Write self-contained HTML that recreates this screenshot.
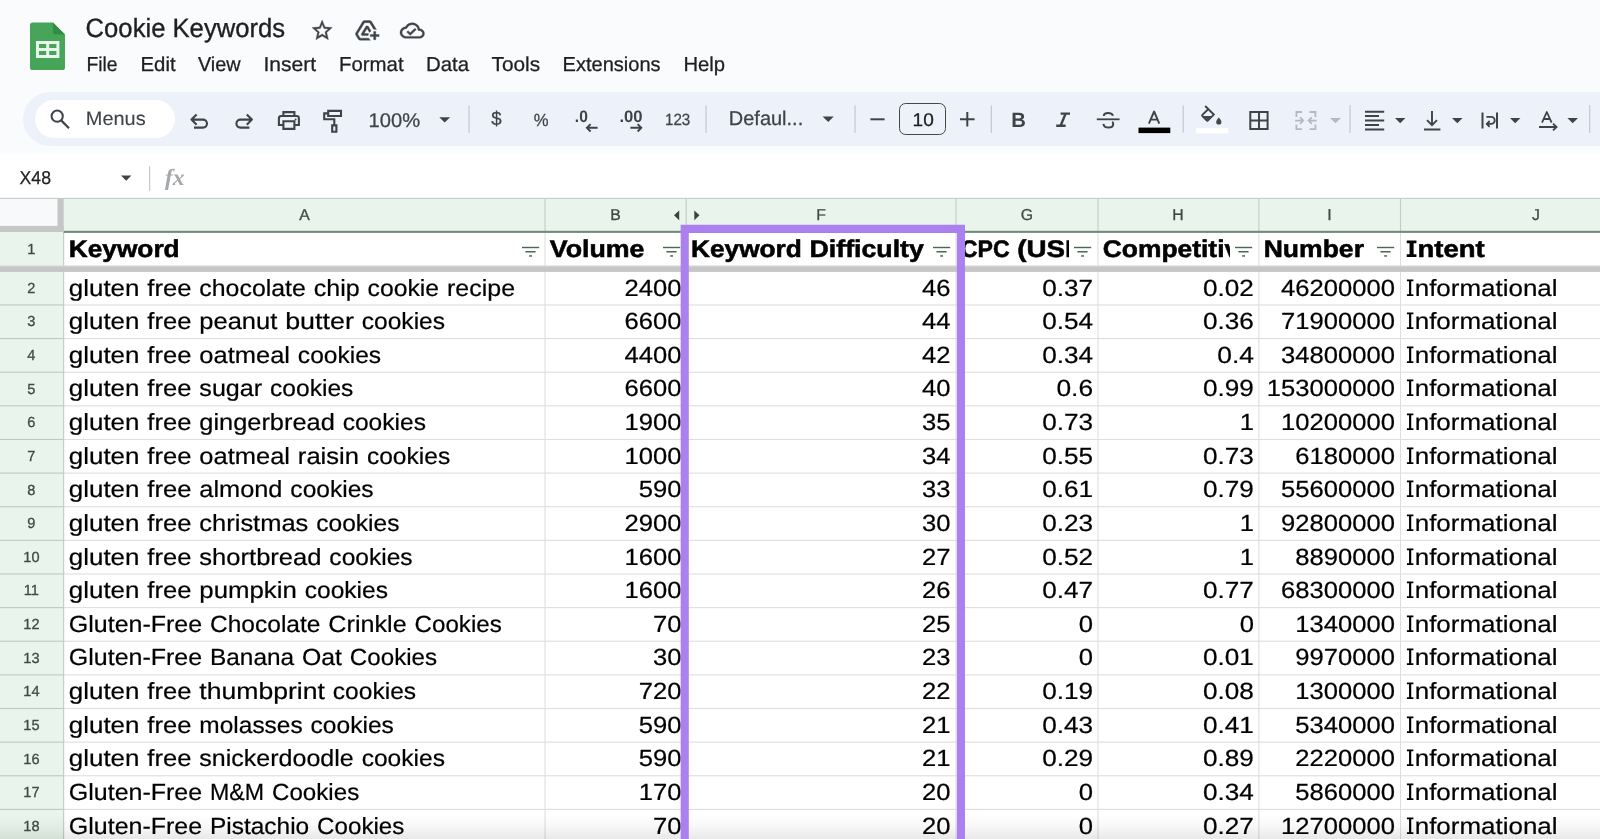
<!DOCTYPE html>
<html><head><meta charset="utf-8"><title>Cookie Keywords - Google Sheets</title>
<style>

html,body{margin:0;padding:0}
body{width:1600px;height:839px;overflow:hidden;position:relative;background:#f9fbfd;font-family:"Liberation Sans",sans-serif}
text{white-space:pre}
.a{position:absolute}
svg{position:absolute;overflow:visible}
svg svg{overflow:hidden}
#root{position:absolute;left:0;top:0;width:1600px;height:839px;will-change:transform}

</style></head>
<body>
<div id='root'>
<div class='a' style='left:0px;top:156px;width:1600px;height:43px;background:#ffffff;'></div>
<div class='a' style='left:0px;top:150px;width:1600px;height:6px;background:linear-gradient(#f9fbfd,#ffffff);'></div>
<svg style='left:0;top:0' width='1600' height='839' viewBox='0 0 1600 839'><rect x='0.00' y='198.40' width='1600.00' height='641.00' fill='#ffffff'/><rect x='63.60' y='198.40' width='1537.00' height='33.40' fill='#e9f5ec'/><rect x='0.00' y='232.00' width='63.60' height='607.00' fill='#e9f5ec'/><rect x='0.00' y='198.40' width='57.60' height='27.80' fill='#f8f9fa'/><rect x='0.00' y='197.85' width='1600.00' height='1.10' fill='#c4ccc7'/><rect x='63.60' y='304.40' width='1537.00' height='1.10' fill='#dedede'/><rect x='0.00' y='304.40' width='63.60' height='1.10' fill='#bccbc1'/><rect x='63.60' y='338.03' width='1537.00' height='1.10' fill='#dedede'/><rect x='0.00' y='338.03' width='63.60' height='1.10' fill='#bccbc1'/><rect x='63.60' y='371.66' width='1537.00' height='1.10' fill='#dedede'/><rect x='0.00' y='371.66' width='63.60' height='1.10' fill='#bccbc1'/><rect x='63.60' y='405.29' width='1537.00' height='1.10' fill='#dedede'/><rect x='0.00' y='405.29' width='63.60' height='1.10' fill='#bccbc1'/><rect x='63.60' y='438.92' width='1537.00' height='1.10' fill='#dedede'/><rect x='0.00' y='438.92' width='63.60' height='1.10' fill='#bccbc1'/><rect x='63.60' y='472.55' width='1537.00' height='1.10' fill='#dedede'/><rect x='0.00' y='472.55' width='63.60' height='1.10' fill='#bccbc1'/><rect x='63.60' y='506.18' width='1537.00' height='1.10' fill='#dedede'/><rect x='0.00' y='506.18' width='63.60' height='1.10' fill='#bccbc1'/><rect x='63.60' y='539.81' width='1537.00' height='1.10' fill='#dedede'/><rect x='0.00' y='539.81' width='63.60' height='1.10' fill='#bccbc1'/><rect x='63.60' y='573.44' width='1537.00' height='1.10' fill='#dedede'/><rect x='0.00' y='573.44' width='63.60' height='1.10' fill='#bccbc1'/><rect x='63.60' y='607.07' width='1537.00' height='1.10' fill='#dedede'/><rect x='0.00' y='607.07' width='63.60' height='1.10' fill='#bccbc1'/><rect x='63.60' y='640.70' width='1537.00' height='1.10' fill='#dedede'/><rect x='0.00' y='640.70' width='63.60' height='1.10' fill='#bccbc1'/><rect x='63.60' y='674.33' width='1537.00' height='1.10' fill='#dedede'/><rect x='0.00' y='674.33' width='63.60' height='1.10' fill='#bccbc1'/><rect x='63.60' y='707.96' width='1537.00' height='1.10' fill='#dedede'/><rect x='0.00' y='707.96' width='63.60' height='1.10' fill='#bccbc1'/><rect x='63.60' y='741.59' width='1537.00' height='1.10' fill='#dedede'/><rect x='0.00' y='741.59' width='63.60' height='1.10' fill='#bccbc1'/><rect x='63.60' y='775.22' width='1537.00' height='1.10' fill='#dedede'/><rect x='0.00' y='775.22' width='63.60' height='1.10' fill='#bccbc1'/><rect x='63.60' y='808.85' width='1537.00' height='1.10' fill='#dedede'/><rect x='0.00' y='808.85' width='63.60' height='1.10' fill='#bccbc1'/><rect x='63.60' y='842.48' width='1537.00' height='1.10' fill='#dedede'/><rect x='0.00' y='842.48' width='63.60' height='1.10' fill='#bccbc1'/><rect x='544.45' y='232.00' width='1.10' height='607.00' fill='#dedede'/><rect x='544.45' y='198.40' width='1.10' height='33.00' fill='#bfcfc5'/><rect x='685.65' y='232.00' width='1.10' height='607.00' fill='#dedede'/><rect x='685.65' y='198.40' width='1.10' height='33.00' fill='#bfcfc5'/><rect x='955.45' y='232.00' width='1.10' height='607.00' fill='#dedede'/><rect x='955.45' y='198.40' width='1.10' height='33.00' fill='#bfcfc5'/><rect x='1097.45' y='232.00' width='1.10' height='607.00' fill='#dedede'/><rect x='1097.45' y='198.40' width='1.10' height='33.00' fill='#bfcfc5'/><rect x='1258.35' y='232.00' width='1.10' height='607.00' fill='#dedede'/><rect x='1258.35' y='198.40' width='1.10' height='33.00' fill='#bfcfc5'/><rect x='1399.95' y='232.00' width='1.10' height='607.00' fill='#dedede'/><rect x='1399.95' y='198.40' width='1.10' height='33.00' fill='#bfcfc5'/><rect x='63.05' y='232.00' width='1.15' height='607.00' fill='#c3cbc6'/><rect x='63.60' y='230.80' width='1537.00' height='2.10' fill='#718c7a'/><rect x='57.50' y='198.40' width='6.20' height='33.60' fill='#c6c6c7'/><rect x='0.00' y='225.90' width='63.70' height='6.10' fill='#c6c6c7'/><defs><linearGradient id='fz' x1='0' y1='0' x2='0' y2='1'><stop offset='0' stop-color='#dcdcdc'/><stop offset='0.3' stop-color='#c7c7c7'/><stop offset='1' stop-color='#c5c5c5'/></linearGradient></defs><rect x='0' y='265.4' width='1600' height='6.5' fill='url(#fz)'/></svg>





















































































































































<svg style='left:521.7px;top:246px' width='18' height='12' viewBox='0 0 18 12'><rect x='0' y='0.8' width='17.2' height='1.4' fill='#4a6753'/><rect x='3.4' y='5' width='10.2' height='1.5' fill='#4a6753'/><rect x='7.2' y='9.2' width='2.8' height='1.5' fill='#4a6753'/></svg>
<svg style='left:662.8px;top:246px' width='18' height='12' viewBox='0 0 18 12'><rect x='0' y='0.8' width='17.2' height='1.4' fill='#4a6753'/><rect x='3.4' y='5' width='10.2' height='1.5' fill='#4a6753'/><rect x='7.2' y='9.2' width='2.8' height='1.5' fill='#4a6753'/></svg>
<svg style='left:932.5px;top:246px' width='18' height='12' viewBox='0 0 18 12'><rect x='0' y='0.8' width='17.2' height='1.4' fill='#4a6753'/><rect x='3.4' y='5' width='10.2' height='1.5' fill='#4a6753'/><rect x='7.2' y='9.2' width='2.8' height='1.5' fill='#4a6753'/></svg>
<svg style='left:1074px;top:246px' width='18' height='12' viewBox='0 0 18 12'><rect x='0' y='0.8' width='17.2' height='1.4' fill='#4a6753'/><rect x='3.4' y='5' width='10.2' height='1.5' fill='#4a6753'/><rect x='7.2' y='9.2' width='2.8' height='1.5' fill='#4a6753'/></svg>
<svg style='left:1235px;top:246px' width='18' height='12' viewBox='0 0 18 12'><rect x='0' y='0.8' width='17.2' height='1.4' fill='#4a6753'/><rect x='3.4' y='5' width='10.2' height='1.5' fill='#4a6753'/><rect x='7.2' y='9.2' width='2.8' height='1.5' fill='#4a6753'/></svg>
<svg style='left:1377px;top:246px' width='18' height='12' viewBox='0 0 18 12'><rect x='0' y='0.8' width='17.2' height='1.4' fill='#4a6753'/><rect x='3.4' y='5' width='10.2' height='1.5' fill='#4a6753'/><rect x='7.2' y='9.2' width='2.8' height='1.5' fill='#4a6753'/></svg>
<svg style='left:670px;top:205px' width='40' height='20' viewBox='670 205 40 20'><path d='M679.2 210.4 V220.2 L674 215.3 z M694.3 210.4 V220.2 L699.5 215.3 z' fill='#38443c'/></svg>
<div class='a' style='left:0px;top:815px;width:1600px;height:24px;background:linear-gradient(rgba(0,0,0,0),rgba(0,0,0,0.03) 50%,rgba(0,0,0,0.09));'></div>
<svg style='left:0;top:0' width='100' height='80' viewBox='0 0 100 80'>
<path d='M32.6 22.6 H53 L65 34.6 V67.4 a2.6 2.6 0 0 1 -2.6 2.6 H32.6 a2.6 2.6 0 0 1 -2.6 -2.6 V25.2 a2.6 2.6 0 0 1 2.6 -2.6 z' fill='#46a559'/>
<path d='M53 22.6 L65 34.6 H55.4 a2.4 2.4 0 0 1 -2.4 -2.4 z' fill='#2f8d46'/>
<path d='M36 41 H59.4 V58 H36 z M39 44 V48 H46.2 V44 z M49.2 44 V48 H56.4 V44 z M39 51 V55 H46.2 V51 z M49.2 51 V55 H56.4 V51 z' fill='#e9f6ec' fill-rule='evenodd'/>
</svg>

<svg style='left:310.1px;top:18.4px' width='24.3' height='24.9' viewBox='0 0 24 24' preserveAspectRatio='none'><path fill='#3f4347' stroke='#3f4347' stroke-width='0.35' d='M22 9.24l-7.19-.62L12 2 9.19 8.63 2 9.24l5.46 4.73L5.82 21 12 17.27 18.18 21l-1.63-7.03L22 9.24zM12 15.4l-3.76 2.27 1-4.28-3.32-2.88 4.38-.38L12 6.1l1.71 4.04 4.38.38-3.32 2.88 1 4.28L12 15.4z'/></svg>
<svg style='left:354.4px;top:18.3px' width='26.2' height='24.8' viewBox='0 0 24 24' preserveAspectRatio='none'><path fill='#3f4347' stroke='#3f4347' stroke-width='0.35' d='M20 21v-3h3v-2h-3v-3h-2v3h-3v2h3v3h2zm-4.97.5H5.66c-.72 0-1.38-.38-1.73-1L1.57 16.4c-.36-.62-.35-1.38.01-2L7.92 3.49C8.28 2.88 8.94 2.5 9.65 2.5h4.7c.71 0 1.37.38 1.73.99l4.48 7.71c-.51-.13-1.03-.2-1.56-.2-.28 0-.56.02-.84.06L14.35 4.5h-4.7L3.31 15.41l2.35 4.09h7.89c.35.77.85 1.45 1.48 2zM13.34 15c-.22.63-.34 1.3-.34 2H7.25l-.73-1.27 4.58-7.98h1.8l2.74 4.77c-.56.38-1.06.86-1.46 1.41L12 10.2 9.24 15h4.1z'/></svg>
<svg style='left:400.2px;top:19.2px' width='24.5' height='23.2' viewBox='0 0 24 24' preserveAspectRatio='none'><path fill='#3f4347' stroke='#3f4347' stroke-width='0.35' d='M19.35 10.04C18.67 6.59 15.64 4 12 4 9.11 4 6.6 5.64 5.35 8.04 2.34 8.36 0 10.91 0 14c0 3.31 2.69 6 6 6h13c2.76 0 5-2.24 5-5 0-2.64-2.05-4.78-4.65-4.96zM19 18H6c-2.21 0-4-1.79-4-4 0-2.05 1.53-3.76 3.56-3.97l1.07-.11.5-.95C8.08 7.14 9.94 6 12 6c2.62 0 4.88 1.86 5.39 4.43l.3 1.5 1.53.11c1.56.1 2.78 1.41 2.78 2.96 0 1.65-1.35 3-3 3zm-9-3.82l-2.09-2.09L6.5 13.5 10 17l6.01-6.01-1.41-1.41z'/></svg>









<div class='a' style='left:23.2px;top:92.1px;width:1700px;height:54.2px;background:#edf2fa;border-radius:27.1px'></div>
<div class='a' style='left:34.8px;top:100.2px;width:139.8px;height:38.2px;background:#ffffff;border-radius:19.1px'></div>










<div class='a' style='left:899.2px;top:102.5px;width:44.6px;height:30.4px;border:1.5px solid #444746;border-radius:6.5px'></div>
<svg style='left:0;top:0' width='1600' height='200' viewBox='0 0 1600 200' fill='none' stroke='#3f4347' stroke-width='1.9'><circle cx='57.2' cy='116.2' r='5.6' stroke-width='2'/><path d='M61.4 120.6 L69 128.2' stroke-width='2.2'/><path d='M196.6 114.4 L191.5 119.6 L196.6 124.8 M192 119.6 H203 A4 4 0 0 1 203 127.6 H194' stroke-width='2.1' stroke-linejoin='round'/><path d='M246.8 114.4 L251.9 119.6 L246.8 124.8 M251.4 119.6 H240.4 A4 4 0 0 0 240.4 127.6 H249.4' stroke-width='2.1' stroke-linejoin='round'/><path d='M283.4 116 V112.1 H294.4 V116 M283.4 125 H278.9 V118.4 a2.4 2.4 0 0 1 2.4 -2.4 H296.5 a2.4 2.4 0 0 1 2.4 2.4 V125 H294.4 M283.4 121.3 H294.4 V128.9 H283.4 z' stroke-width='2.1'/><circle cx='295.6' cy='119.6' r='1' fill='#444746' stroke='none'/><path d='M328.2 110.9 H341 V116 H328.2 z M328.2 113.4 H324.2 V119.2 H334.3 V125 M332.2 125.4 H336.4 V131.8 H332.2 z' stroke-width='2.1'/><path d='M439.3 117.2 H450.1 L444.70000000000005 122.6 z' fill='#3f4347' stroke='none'/><rect x='468.4' y='105.5' width='1.3' height='27.5' fill='#c7cad1' stroke='none'/><path d='M597.6 127.8 H587 M590.6 124.1 L586.9 127.8 L590.6 131.5' stroke-width='1.9'/><path d='M630.4 127.8 H641.2 M637.6 124.1 L641.3 127.8 L637.6 131.5' stroke-width='1.9'/><rect x='705.4' y='105.5' width='1.3' height='27.5' fill='#c7cad1' stroke='none'/><path d='M822.6 116.4 H833.8 L828.2 122 z' fill='#3f4347' stroke='none'/><rect x='854.4' y='105.5' width='1.3' height='27.5' fill='#c7cad1' stroke='none'/><path d='M870.4 119.3 H884.6' stroke-width='2'/><path d='M960 119.3 H974.6 M967.3 112 V126.6' stroke-width='2'/><rect x='990.6999999999999' y='105.5' width='1.3' height='27.5' fill='#c7cad1' stroke='none'/><path d='M1060.6 113.6 H1070 M1056.2 125.8 H1065.6 M1065.6 113.6 L1060.6 125.8' stroke-width='2.4'/><path d='M1096.8 119.3 H1119.6' stroke-width='1.8'/><path d='M1113 115.8 C1112.4 113.6 1110.6 112.9 1108.2 112.9 C1105.8 112.9 1103.8 114 1103.8 116 M1103.4 123.8 C1103.8 126.4 1105.8 127.6 1108.4 127.6 C1111.2 127.6 1113.2 126.4 1113.2 124 C1113.2 123 1112.8 122.2 1112.2 121.8' stroke-width='2'/><path d='M1148.9 123.6 L1154.1 111.5 L1159.3 123.6 M1150.7 119.6 H1157.5' stroke-width='1.9' stroke-linejoin='round'/><rect x='1138.5' y='127.6' width='31.8' height='5.5' fill='#000' stroke='none'/><rect x='1182.6000000000001' y='105.5' width='1.3' height='27.099999999999994' fill='#c7cad1' stroke='none'/><path d='M1205.2 106 L1213.8 114.6 L1208 120.4 a1 1 0 0 1 -1.4 0 L1202.4 116.2 a1 1 0 0 1 0 -1.4 L1208.4 109' stroke-width='1.9'/><path d='M1202.6 116 H1213 L1207.4 121.4 z' fill='#444746' stroke='none'/><path d='M1218.8 117.6 C1218.8 117.6 1216.2 120.4 1216.2 122 a2.6 2.6 0 0 0 5.2 0 C1221.4 120.4 1218.8 117.6 1218.8 117.6 z' fill='#444746' stroke='none'/><rect x='1196.2' y='128' width='32' height='5.4' fill='#fff' stroke='none'/><path d='M1250.3 112 H1267.6 V129 H1250.3 z M1259 112 V129 M1250.3 120.5 H1267.6' stroke-width='2'/><g stroke='#b4b9c1' stroke-width='1.8'><path d='M1302 112 H1296.4 V117 M1296.4 124.4 V129.2 H1302 M1309.6 112 H1315.4 V117 M1315.4 124.4 V129.2 H1309.6 M1295.2 120.6 H1302.6 M1300 117.4 L1303.2 120.6 L1300 123.8 M1316.6 120.6 H1309.2 M1311.8 117.4 L1308.6 120.6 L1311.8 123.8'/></g><path d='M1330 118 H1341 L1335.5 123.2 z' fill='#b4b9c1' stroke='none'/><rect x='1349.4' y='105' width='1.3' height='28' fill='#c7cad1' stroke='none'/><path d='M1365 111.8 H1384.2 M1365 116.1 H1379 M1365 120.6 H1384.2 M1365 125 H1379 M1365 129.4 H1384.2' stroke-width='2'/><path d='M1395 118 H1405.4 L1400.2 123.2 z' fill='#3f4347' stroke='none'/><path d='M1432 111 V125 M1427 120.2 L1432 125.2 L1437 120.2 M1424 129.5 H1440.4' stroke-width='1.9'/><path d='M1452 118 H1462.6 L1457.3 123.2 z' fill='#3f4347' stroke='none'/><path d='M1482.5 112.5 V128.6 M1497 112.5 V128.6' stroke-width='2'/><path d='M1486.4 116.9 H1491.2 A3.5 3.5 0 0 1 1491.2 123.9 H1487 M1489.7 121 L1486.8 123.9 L1489.7 126.8' stroke-width='1.9'/><path d='M1510 118 H1520.4 L1515.2 123.2 z' fill='#3f4347' stroke='none'/><path d='M1542 122.6 L1546.8 112 L1551.6 122.6 M1543.8 119 H1549.8' stroke-width='1.8' stroke-linejoin='round'/><path d='M1539 127 H1555.6 M1553 123.6 L1556.6 127 L1553 130.4' stroke-width='1.8'/><path d='M1567.4 118 H1578 L1572.7 123.2 z' fill='#3f4347' stroke='none'/><rect x='1589.0' y='105' width='1.3' height='28' fill='#c7cad1' stroke='none'/><path d='M121 175.4 H131.4 L126.2 180.8 z' fill='#3f4347' stroke='none'/><rect x='149' y='166.4' width='1.2' height='24.4' fill='#c7c7c7' stroke='none'/></svg>


<svg style='left:0;top:0' width='1600' height='839' viewBox='0 0 1600 839'><path fill='#000' d='M1406.90 279.60h6.50v1.75h-2.17v12.90h2.17v1.75h-6.50v-1.75h2.17v-12.90h-2.17zM1406.90 312.60h6.50v1.75h-2.17v12.90h2.17v1.75h-6.50v-1.75h2.17v-12.90h-2.17zM1406.90 346.60h6.50v1.75h-2.17v12.90h2.17v1.75h-6.50v-1.75h2.17v-12.90h-2.17zM1406.90 379.60h6.50v1.75h-2.17v12.90h2.17v1.75h-6.50v-1.75h2.17v-12.90h-2.17zM1406.90 413.60h6.50v1.75h-2.17v12.90h2.17v1.75h-6.50v-1.75h2.17v-12.90h-2.17zM1406.90 447.60h6.50v1.75h-2.17v12.90h2.17v1.75h-6.50v-1.75h2.17v-12.90h-2.17zM1406.90 480.60h6.50v1.75h-2.17v12.90h2.17v1.75h-6.50v-1.75h2.17v-12.90h-2.17zM1406.90 514.60h6.50v1.75h-2.17v12.90h2.17v1.75h-6.50v-1.75h2.17v-12.90h-2.17zM1406.90 548.60h6.50v1.75h-2.17v12.90h2.17v1.75h-6.50v-1.75h2.17v-12.90h-2.17zM1406.90 581.60h6.50v1.75h-2.17v12.90h2.17v1.75h-6.50v-1.75h2.17v-12.90h-2.17zM1406.90 615.60h6.50v1.75h-2.17v12.90h2.17v1.75h-6.50v-1.75h2.17v-12.90h-2.17zM1406.90 648.60h6.50v1.75h-2.17v12.90h2.17v1.75h-6.50v-1.75h2.17v-12.90h-2.17zM1406.90 682.60h6.50v1.75h-2.17v12.90h2.17v1.75h-6.50v-1.75h2.17v-12.90h-2.17zM1406.90 716.60h6.50v1.75h-2.17v12.90h2.17v1.75h-6.50v-1.75h2.17v-12.90h-2.17zM1406.90 749.60h6.50v1.75h-2.17v12.90h2.17v1.75h-6.50v-1.75h2.17v-12.90h-2.17zM1406.90 783.60h6.50v1.75h-2.17v12.90h2.17v1.75h-6.50v-1.75h2.17v-12.90h-2.17zM1406.90 817.60h6.50v1.75h-2.17v12.90h2.17v1.75h-6.50v-1.75h2.17v-12.90h-2.17zM1406.75 240.40h9.70v2.80h-2.82v11.00h2.82v2.80h-9.70v-2.80h2.82v-11.00h-2.82z'/></svg>
<svg id='txt' width='1600' height='839' viewBox='0 0 1600 839' style='left:0;top:0' fill='#000' font-family='Liberation Sans, sans-serif' text-rendering='geometricPrecision'>
<text x='304.40' text-anchor='middle' y='220.10' font-size='15.8' fill='#3f4a43' stroke='#3f4a43' stroke-width='0.3'>A</text>
<text x='615.50' text-anchor='middle' y='220.10' font-size='15.8' fill='#3f4a43' stroke='#3f4a43' stroke-width='0.3'>B</text>
<text x='821.00' text-anchor='middle' y='220.10' font-size='15.8' fill='#3f4a43' stroke='#3f4a43' stroke-width='0.3'>F</text>
<text x='1027.00' text-anchor='middle' y='220.10' font-size='15.8' fill='#3f4a43' stroke='#3f4a43' stroke-width='0.3'>G</text>
<text x='1178.00' text-anchor='middle' y='220.10' font-size='15.8' fill='#3f4a43' stroke='#3f4a43' stroke-width='0.3'>H</text>
<text x='1329.50' text-anchor='middle' y='220.10' font-size='15.8' fill='#3f4a43' stroke='#3f4a43' stroke-width='0.3'>I</text>
<text x='1536.00' text-anchor='middle' y='220.10' font-size='15.8' fill='#3f4a43' stroke='#3f4a43' stroke-width='0.3'>J</text>
<text x='31.40' text-anchor='middle' y='253.50' font-size='14.6' fill='#3f4a43' stroke='#3f4a43' stroke-width='0.3'>1</text>
<text x='31.40' text-anchor='middle' y='292.80' font-size='14.6' fill='#3f4a43' stroke='#3f4a43' stroke-width='0.3'>2</text>
<text x='31.40' text-anchor='middle' y='326.43' font-size='14.6' fill='#3f4a43' stroke='#3f4a43' stroke-width='0.3'>3</text>
<text x='31.40' text-anchor='middle' y='360.06' font-size='14.6' fill='#3f4a43' stroke='#3f4a43' stroke-width='0.3'>4</text>
<text x='31.40' text-anchor='middle' y='393.69' font-size='14.6' fill='#3f4a43' stroke='#3f4a43' stroke-width='0.3'>5</text>
<text x='31.40' text-anchor='middle' y='427.32' font-size='14.6' fill='#3f4a43' stroke='#3f4a43' stroke-width='0.3'>6</text>
<text x='31.40' text-anchor='middle' y='460.95' font-size='14.6' fill='#3f4a43' stroke='#3f4a43' stroke-width='0.3'>7</text>
<text x='31.40' text-anchor='middle' y='494.58' font-size='14.6' fill='#3f4a43' stroke='#3f4a43' stroke-width='0.3'>8</text>
<text x='31.40' text-anchor='middle' y='528.21' font-size='14.6' fill='#3f4a43' stroke='#3f4a43' stroke-width='0.3'>9</text>
<text x='31.40' text-anchor='middle' y='561.84' font-size='14.6' fill='#3f4a43' stroke='#3f4a43' stroke-width='0.3'>10</text>
<text x='31.40' text-anchor='middle' y='595.47' font-size='14.6' fill='#3f4a43' stroke='#3f4a43' stroke-width='0.3'>11</text>
<text x='31.40' text-anchor='middle' y='629.10' font-size='14.6' fill='#3f4a43' stroke='#3f4a43' stroke-width='0.3'>12</text>
<text x='31.40' text-anchor='middle' y='662.73' font-size='14.6' fill='#3f4a43' stroke='#3f4a43' stroke-width='0.3'>13</text>
<text x='31.40' text-anchor='middle' y='696.36' font-size='14.6' fill='#3f4a43' stroke='#3f4a43' stroke-width='0.3'>14</text>
<text x='31.40' text-anchor='middle' y='729.99' font-size='14.6' fill='#3f4a43' stroke='#3f4a43' stroke-width='0.3'>15</text>
<text x='31.40' text-anchor='middle' y='763.62' font-size='14.6' fill='#3f4a43' stroke='#3f4a43' stroke-width='0.3'>16</text>
<text x='31.40' text-anchor='middle' y='797.25' font-size='14.6' fill='#3f4a43' stroke='#3f4a43' stroke-width='0.3'>17</text>
<text x='31.40' text-anchor='middle' y='830.88' font-size='14.6' fill='#3f4a43' stroke='#3f4a43' stroke-width='0.3'>18</text>
<text x='68.80' y='295.50' font-size='23.4' textLength='70.63' lengthAdjust='spacingAndGlyphs' stroke='#000' stroke-width='0.22'>gluten</text>
<text x='147.31' y='295.50' font-size='23.4' textLength='44.15' lengthAdjust='spacingAndGlyphs' stroke='#000' stroke-width='0.22'>free</text>
<text x='199.35' y='295.50' font-size='23.4' textLength='106.49' lengthAdjust='spacingAndGlyphs' stroke='#000' stroke-width='0.22'>chocolate</text>
<text x='313.72' y='295.50' font-size='23.4' textLength='45.94' lengthAdjust='spacingAndGlyphs' stroke='#000' stroke-width='0.22'>chip</text>
<text x='367.55' y='295.50' font-size='23.4' textLength='71.61' lengthAdjust='spacingAndGlyphs' stroke='#000' stroke-width='0.22'>cookie</text>
<text x='447.05' y='295.50' font-size='23.4' textLength='68.03' lengthAdjust='spacingAndGlyphs' stroke='#000' stroke-width='0.22'>recipe</text>
<text x='624.41' y='295.50' font-size='23.4' textLength='56.99' lengthAdjust='spacingAndGlyphs' stroke='#000' stroke-width='0.22'>2400</text>
<text x='922.11' y='295.50' font-size='23.4' textLength='28.49' lengthAdjust='spacingAndGlyphs' stroke='#000' stroke-width='0.22'>46</text>
<text x='1042.21' y='295.50' font-size='23.4' textLength='50.89' lengthAdjust='spacingAndGlyphs' stroke='#000' stroke-width='0.22'>0.37</text>
<text x='1203.01' y='295.50' font-size='23.4' textLength='50.89' lengthAdjust='spacingAndGlyphs' stroke='#000' stroke-width='0.22'>0.02</text>
<text x='1281.13' y='295.50' font-size='23.4' textLength='113.97' lengthAdjust='spacingAndGlyphs' stroke='#000' stroke-width='0.22'>46200000</text>
<text x='1414.73' y='295.50' font-size='23.4' textLength='142.82' lengthAdjust='spacingAndGlyphs' stroke='#000' stroke-width='0.22'>nformational</text>
<text x='68.80' y='329.13' font-size='23.4' textLength='70.63' lengthAdjust='spacingAndGlyphs' stroke='#000' stroke-width='0.22'>gluten</text>
<text x='147.31' y='329.13' font-size='23.4' textLength='44.15' lengthAdjust='spacingAndGlyphs' stroke='#000' stroke-width='0.22'>free</text>
<text x='199.35' y='329.13' font-size='23.4' textLength='77.95' lengthAdjust='spacingAndGlyphs' stroke='#000' stroke-width='0.22'>peanut</text>
<text x='285.18' y='329.13' font-size='23.4' textLength='68.70' lengthAdjust='spacingAndGlyphs' stroke='#000' stroke-width='0.22'>butter</text>
<text x='361.77' y='329.13' font-size='23.4' textLength='83.28' lengthAdjust='spacingAndGlyphs' stroke='#000' stroke-width='0.22'>cookies</text>
<text x='624.41' y='329.13' font-size='23.4' textLength='56.99' lengthAdjust='spacingAndGlyphs' stroke='#000' stroke-width='0.22'>6600</text>
<text x='922.11' y='329.13' font-size='23.4' textLength='28.49' lengthAdjust='spacingAndGlyphs' stroke='#000' stroke-width='0.22'>44</text>
<text x='1042.21' y='329.13' font-size='23.4' textLength='50.89' lengthAdjust='spacingAndGlyphs' stroke='#000' stroke-width='0.22'>0.54</text>
<text x='1203.01' y='329.13' font-size='23.4' textLength='50.89' lengthAdjust='spacingAndGlyphs' stroke='#000' stroke-width='0.22'>0.36</text>
<text x='1281.13' y='329.13' font-size='23.4' textLength='113.97' lengthAdjust='spacingAndGlyphs' stroke='#000' stroke-width='0.22'>71900000</text>
<text x='1414.73' y='329.13' font-size='23.4' textLength='142.82' lengthAdjust='spacingAndGlyphs' stroke='#000' stroke-width='0.22'>nformational</text>
<text x='68.80' y='362.76' font-size='23.4' textLength='70.63' lengthAdjust='spacingAndGlyphs' stroke='#000' stroke-width='0.22'>gluten</text>
<text x='147.31' y='362.76' font-size='23.4' textLength='44.15' lengthAdjust='spacingAndGlyphs' stroke='#000' stroke-width='0.22'>free</text>
<text x='199.35' y='362.76' font-size='23.4' textLength='90.63' lengthAdjust='spacingAndGlyphs' stroke='#000' stroke-width='0.22'>oatmeal</text>
<text x='297.86' y='362.76' font-size='23.4' textLength='83.28' lengthAdjust='spacingAndGlyphs' stroke='#000' stroke-width='0.22'>cookies</text>
<text x='624.41' y='362.76' font-size='23.4' textLength='56.99' lengthAdjust='spacingAndGlyphs' stroke='#000' stroke-width='0.22'>4400</text>
<text x='922.11' y='362.76' font-size='23.4' textLength='28.49' lengthAdjust='spacingAndGlyphs' stroke='#000' stroke-width='0.22'>42</text>
<text x='1042.21' y='362.76' font-size='23.4' textLength='50.89' lengthAdjust='spacingAndGlyphs' stroke='#000' stroke-width='0.22'>0.34</text>
<text x='1217.25' y='362.76' font-size='23.4' textLength='36.65' lengthAdjust='spacingAndGlyphs' stroke='#000' stroke-width='0.22'>0.4</text>
<text x='1281.13' y='362.76' font-size='23.4' textLength='113.97' lengthAdjust='spacingAndGlyphs' stroke='#000' stroke-width='0.22'>34800000</text>
<text x='1414.73' y='362.76' font-size='23.4' textLength='142.82' lengthAdjust='spacingAndGlyphs' stroke='#000' stroke-width='0.22'>nformational</text>
<text x='68.80' y='396.39' font-size='23.4' textLength='70.63' lengthAdjust='spacingAndGlyphs' stroke='#000' stroke-width='0.22'>gluten</text>
<text x='147.31' y='396.39' font-size='23.4' textLength='44.15' lengthAdjust='spacingAndGlyphs' stroke='#000' stroke-width='0.22'>free</text>
<text x='199.35' y='396.39' font-size='23.4' textLength='62.83' lengthAdjust='spacingAndGlyphs' stroke='#000' stroke-width='0.22'>sugar</text>
<text x='270.06' y='396.39' font-size='23.4' textLength='83.28' lengthAdjust='spacingAndGlyphs' stroke='#000' stroke-width='0.22'>cookies</text>
<text x='624.41' y='396.39' font-size='23.4' textLength='56.99' lengthAdjust='spacingAndGlyphs' stroke='#000' stroke-width='0.22'>6600</text>
<text x='922.11' y='396.39' font-size='23.4' textLength='28.49' lengthAdjust='spacingAndGlyphs' stroke='#000' stroke-width='0.22'>40</text>
<text x='1056.45' y='396.39' font-size='23.4' textLength='36.65' lengthAdjust='spacingAndGlyphs' stroke='#000' stroke-width='0.22'>0.6</text>
<text x='1203.01' y='396.39' font-size='23.4' textLength='50.89' lengthAdjust='spacingAndGlyphs' stroke='#000' stroke-width='0.22'>0.99</text>
<text x='1266.88' y='396.39' font-size='23.4' textLength='128.22' lengthAdjust='spacingAndGlyphs' stroke='#000' stroke-width='0.22'>153000000</text>
<text x='1414.73' y='396.39' font-size='23.4' textLength='142.82' lengthAdjust='spacingAndGlyphs' stroke='#000' stroke-width='0.22'>nformational</text>
<text x='68.80' y='430.02' font-size='23.4' textLength='70.63' lengthAdjust='spacingAndGlyphs' stroke='#000' stroke-width='0.22'>gluten</text>
<text x='147.31' y='430.02' font-size='23.4' textLength='44.15' lengthAdjust='spacingAndGlyphs' stroke='#000' stroke-width='0.22'>free</text>
<text x='199.35' y='430.02' font-size='23.4' textLength='135.43' lengthAdjust='spacingAndGlyphs' stroke='#000' stroke-width='0.22'>gingerbread</text>
<text x='342.66' y='430.02' font-size='23.4' textLength='83.28' lengthAdjust='spacingAndGlyphs' stroke='#000' stroke-width='0.22'>cookies</text>
<text x='624.41' y='430.02' font-size='23.4' textLength='56.99' lengthAdjust='spacingAndGlyphs' stroke='#000' stroke-width='0.22'>1900</text>
<text x='922.11' y='430.02' font-size='23.4' textLength='28.49' lengthAdjust='spacingAndGlyphs' stroke='#000' stroke-width='0.22'>35</text>
<text x='1042.21' y='430.02' font-size='23.4' textLength='50.89' lengthAdjust='spacingAndGlyphs' stroke='#000' stroke-width='0.22'>0.73</text>
<text x='1239.65' y='430.02' font-size='23.4' textLength='14.25' lengthAdjust='spacingAndGlyphs' stroke='#000' stroke-width='0.22'>1</text>
<text x='1281.13' y='430.02' font-size='23.4' textLength='113.97' lengthAdjust='spacingAndGlyphs' stroke='#000' stroke-width='0.22'>10200000</text>
<text x='1414.73' y='430.02' font-size='23.4' textLength='142.82' lengthAdjust='spacingAndGlyphs' stroke='#000' stroke-width='0.22'>nformational</text>
<text x='68.80' y='463.65' font-size='23.4' textLength='70.63' lengthAdjust='spacingAndGlyphs' stroke='#000' stroke-width='0.22'>gluten</text>
<text x='147.31' y='463.65' font-size='23.4' textLength='44.15' lengthAdjust='spacingAndGlyphs' stroke='#000' stroke-width='0.22'>free</text>
<text x='199.35' y='463.65' font-size='23.4' textLength='90.63' lengthAdjust='spacingAndGlyphs' stroke='#000' stroke-width='0.22'>oatmeal</text>
<text x='297.86' y='463.65' font-size='23.4' textLength='61.15' lengthAdjust='spacingAndGlyphs' stroke='#000' stroke-width='0.22'>raisin</text>
<text x='366.90' y='463.65' font-size='23.4' textLength='83.28' lengthAdjust='spacingAndGlyphs' stroke='#000' stroke-width='0.22'>cookies</text>
<text x='624.41' y='463.65' font-size='23.4' textLength='56.99' lengthAdjust='spacingAndGlyphs' stroke='#000' stroke-width='0.22'>1000</text>
<text x='922.11' y='463.65' font-size='23.4' textLength='28.49' lengthAdjust='spacingAndGlyphs' stroke='#000' stroke-width='0.22'>34</text>
<text x='1042.21' y='463.65' font-size='23.4' textLength='50.89' lengthAdjust='spacingAndGlyphs' stroke='#000' stroke-width='0.22'>0.55</text>
<text x='1203.01' y='463.65' font-size='23.4' textLength='50.89' lengthAdjust='spacingAndGlyphs' stroke='#000' stroke-width='0.22'>0.73</text>
<text x='1295.38' y='463.65' font-size='23.4' textLength='99.72' lengthAdjust='spacingAndGlyphs' stroke='#000' stroke-width='0.22'>6180000</text>
<text x='1414.73' y='463.65' font-size='23.4' textLength='142.82' lengthAdjust='spacingAndGlyphs' stroke='#000' stroke-width='0.22'>nformational</text>
<text x='68.80' y='497.28' font-size='23.4' textLength='70.63' lengthAdjust='spacingAndGlyphs' stroke='#000' stroke-width='0.22'>gluten</text>
<text x='147.31' y='497.28' font-size='23.4' textLength='44.15' lengthAdjust='spacingAndGlyphs' stroke='#000' stroke-width='0.22'>free</text>
<text x='199.35' y='497.28' font-size='23.4' textLength='83.13' lengthAdjust='spacingAndGlyphs' stroke='#000' stroke-width='0.22'>almond</text>
<text x='290.36' y='497.28' font-size='23.4' textLength='83.28' lengthAdjust='spacingAndGlyphs' stroke='#000' stroke-width='0.22'>cookies</text>
<text x='638.66' y='497.28' font-size='23.4' textLength='42.74' lengthAdjust='spacingAndGlyphs' stroke='#000' stroke-width='0.22'>590</text>
<text x='922.11' y='497.28' font-size='23.4' textLength='28.49' lengthAdjust='spacingAndGlyphs' stroke='#000' stroke-width='0.22'>33</text>
<text x='1042.21' y='497.28' font-size='23.4' textLength='50.89' lengthAdjust='spacingAndGlyphs' stroke='#000' stroke-width='0.22'>0.61</text>
<text x='1203.01' y='497.28' font-size='23.4' textLength='50.89' lengthAdjust='spacingAndGlyphs' stroke='#000' stroke-width='0.22'>0.79</text>
<text x='1281.13' y='497.28' font-size='23.4' textLength='113.97' lengthAdjust='spacingAndGlyphs' stroke='#000' stroke-width='0.22'>55600000</text>
<text x='1414.73' y='497.28' font-size='23.4' textLength='142.82' lengthAdjust='spacingAndGlyphs' stroke='#000' stroke-width='0.22'>nformational</text>
<text x='68.80' y='530.91' font-size='23.4' textLength='70.63' lengthAdjust='spacingAndGlyphs' stroke='#000' stroke-width='0.22'>gluten</text>
<text x='147.31' y='530.91' font-size='23.4' textLength='44.15' lengthAdjust='spacingAndGlyphs' stroke='#000' stroke-width='0.22'>free</text>
<text x='199.35' y='530.91' font-size='23.4' textLength='108.98' lengthAdjust='spacingAndGlyphs' stroke='#000' stroke-width='0.22'>christmas</text>
<text x='316.21' y='530.91' font-size='23.4' textLength='83.28' lengthAdjust='spacingAndGlyphs' stroke='#000' stroke-width='0.22'>cookies</text>
<text x='624.41' y='530.91' font-size='23.4' textLength='56.99' lengthAdjust='spacingAndGlyphs' stroke='#000' stroke-width='0.22'>2900</text>
<text x='922.11' y='530.91' font-size='23.4' textLength='28.49' lengthAdjust='spacingAndGlyphs' stroke='#000' stroke-width='0.22'>30</text>
<text x='1042.21' y='530.91' font-size='23.4' textLength='50.89' lengthAdjust='spacingAndGlyphs' stroke='#000' stroke-width='0.22'>0.23</text>
<text x='1239.65' y='530.91' font-size='23.4' textLength='14.25' lengthAdjust='spacingAndGlyphs' stroke='#000' stroke-width='0.22'>1</text>
<text x='1281.13' y='530.91' font-size='23.4' textLength='113.97' lengthAdjust='spacingAndGlyphs' stroke='#000' stroke-width='0.22'>92800000</text>
<text x='1414.73' y='530.91' font-size='23.4' textLength='142.82' lengthAdjust='spacingAndGlyphs' stroke='#000' stroke-width='0.22'>nformational</text>
<text x='68.80' y='564.54' font-size='23.4' textLength='70.63' lengthAdjust='spacingAndGlyphs' stroke='#000' stroke-width='0.22'>gluten</text>
<text x='147.31' y='564.54' font-size='23.4' textLength='44.15' lengthAdjust='spacingAndGlyphs' stroke='#000' stroke-width='0.22'>free</text>
<text x='199.35' y='564.54' font-size='23.4' textLength='122.12' lengthAdjust='spacingAndGlyphs' stroke='#000' stroke-width='0.22'>shortbread</text>
<text x='329.36' y='564.54' font-size='23.4' textLength='83.28' lengthAdjust='spacingAndGlyphs' stroke='#000' stroke-width='0.22'>cookies</text>
<text x='624.41' y='564.54' font-size='23.4' textLength='56.99' lengthAdjust='spacingAndGlyphs' stroke='#000' stroke-width='0.22'>1600</text>
<text x='922.11' y='564.54' font-size='23.4' textLength='28.49' lengthAdjust='spacingAndGlyphs' stroke='#000' stroke-width='0.22'>27</text>
<text x='1042.21' y='564.54' font-size='23.4' textLength='50.89' lengthAdjust='spacingAndGlyphs' stroke='#000' stroke-width='0.22'>0.52</text>
<text x='1239.65' y='564.54' font-size='23.4' textLength='14.25' lengthAdjust='spacingAndGlyphs' stroke='#000' stroke-width='0.22'>1</text>
<text x='1295.38' y='564.54' font-size='23.4' textLength='99.72' lengthAdjust='spacingAndGlyphs' stroke='#000' stroke-width='0.22'>8890000</text>
<text x='1414.73' y='564.54' font-size='23.4' textLength='142.82' lengthAdjust='spacingAndGlyphs' stroke='#000' stroke-width='0.22'>nformational</text>
<text x='68.80' y='598.17' font-size='23.4' textLength='70.63' lengthAdjust='spacingAndGlyphs' stroke='#000' stroke-width='0.22'>gluten</text>
<text x='147.31' y='598.17' font-size='23.4' textLength='44.15' lengthAdjust='spacingAndGlyphs' stroke='#000' stroke-width='0.22'>free</text>
<text x='199.35' y='598.17' font-size='23.4' textLength='97.46' lengthAdjust='spacingAndGlyphs' stroke='#000' stroke-width='0.22'>pumpkin</text>
<text x='304.69' y='598.17' font-size='23.4' textLength='83.28' lengthAdjust='spacingAndGlyphs' stroke='#000' stroke-width='0.22'>cookies</text>
<text x='624.41' y='598.17' font-size='23.4' textLength='56.99' lengthAdjust='spacingAndGlyphs' stroke='#000' stroke-width='0.22'>1600</text>
<text x='922.11' y='598.17' font-size='23.4' textLength='28.49' lengthAdjust='spacingAndGlyphs' stroke='#000' stroke-width='0.22'>26</text>
<text x='1042.21' y='598.17' font-size='23.4' textLength='50.89' lengthAdjust='spacingAndGlyphs' stroke='#000' stroke-width='0.22'>0.47</text>
<text x='1203.01' y='598.17' font-size='23.4' textLength='50.89' lengthAdjust='spacingAndGlyphs' stroke='#000' stroke-width='0.22'>0.77</text>
<text x='1281.13' y='598.17' font-size='23.4' textLength='113.97' lengthAdjust='spacingAndGlyphs' stroke='#000' stroke-width='0.22'>68300000</text>
<text x='1414.73' y='598.17' font-size='23.4' textLength='142.82' lengthAdjust='spacingAndGlyphs' stroke='#000' stroke-width='0.22'>nformational</text>
<text x='68.80' y='631.80' font-size='23.4' textLength='133.35' lengthAdjust='spacingAndGlyphs' stroke='#000' stroke-width='0.22'>Gluten-Free</text>
<text x='210.03' y='631.80' font-size='23.4' textLength='110.45' lengthAdjust='spacingAndGlyphs' stroke='#000' stroke-width='0.22'>Chocolate</text>
<text x='328.37' y='631.80' font-size='23.4' textLength='78.27' lengthAdjust='spacingAndGlyphs' stroke='#000' stroke-width='0.22'>Crinkle</text>
<text x='414.52' y='631.80' font-size='23.4' textLength='87.25' lengthAdjust='spacingAndGlyphs' stroke='#000' stroke-width='0.22'>Cookies</text>
<text x='652.91' y='631.80' font-size='23.4' textLength='28.49' lengthAdjust='spacingAndGlyphs' stroke='#000' stroke-width='0.22'>70</text>
<text x='922.11' y='631.80' font-size='23.4' textLength='28.49' lengthAdjust='spacingAndGlyphs' stroke='#000' stroke-width='0.22'>25</text>
<text x='1078.85' y='631.80' font-size='23.4' textLength='14.25' lengthAdjust='spacingAndGlyphs' stroke='#000' stroke-width='0.22'>0</text>
<text x='1239.65' y='631.80' font-size='23.4' textLength='14.25' lengthAdjust='spacingAndGlyphs' stroke='#000' stroke-width='0.22'>0</text>
<text x='1295.38' y='631.80' font-size='23.4' textLength='99.72' lengthAdjust='spacingAndGlyphs' stroke='#000' stroke-width='0.22'>1340000</text>
<text x='1414.73' y='631.80' font-size='23.4' textLength='142.82' lengthAdjust='spacingAndGlyphs' stroke='#000' stroke-width='0.22'>nformational</text>
<text x='68.80' y='665.43' font-size='23.4' textLength='133.35' lengthAdjust='spacingAndGlyphs' stroke='#000' stroke-width='0.22'>Gluten-Free</text>
<text x='210.03' y='665.43' font-size='23.4' textLength='84.11' lengthAdjust='spacingAndGlyphs' stroke='#000' stroke-width='0.22'>Banana</text>
<text x='302.03' y='665.43' font-size='23.4' textLength='39.92' lengthAdjust='spacingAndGlyphs' stroke='#000' stroke-width='0.22'>Oat</text>
<text x='349.83' y='665.43' font-size='23.4' textLength='87.25' lengthAdjust='spacingAndGlyphs' stroke='#000' stroke-width='0.22'>Cookies</text>
<text x='652.91' y='665.43' font-size='23.4' textLength='28.49' lengthAdjust='spacingAndGlyphs' stroke='#000' stroke-width='0.22'>30</text>
<text x='922.11' y='665.43' font-size='23.4' textLength='28.49' lengthAdjust='spacingAndGlyphs' stroke='#000' stroke-width='0.22'>23</text>
<text x='1078.85' y='665.43' font-size='23.4' textLength='14.25' lengthAdjust='spacingAndGlyphs' stroke='#000' stroke-width='0.22'>0</text>
<text x='1203.01' y='665.43' font-size='23.4' textLength='50.89' lengthAdjust='spacingAndGlyphs' stroke='#000' stroke-width='0.22'>0.01</text>
<text x='1295.38' y='665.43' font-size='23.4' textLength='99.72' lengthAdjust='spacingAndGlyphs' stroke='#000' stroke-width='0.22'>9970000</text>
<text x='1414.73' y='665.43' font-size='23.4' textLength='142.82' lengthAdjust='spacingAndGlyphs' stroke='#000' stroke-width='0.22'>nformational</text>
<text x='68.80' y='699.06' font-size='23.4' textLength='70.63' lengthAdjust='spacingAndGlyphs' stroke='#000' stroke-width='0.22'>gluten</text>
<text x='147.31' y='699.06' font-size='23.4' textLength='44.15' lengthAdjust='spacingAndGlyphs' stroke='#000' stroke-width='0.22'>free</text>
<text x='199.35' y='699.06' font-size='23.4' textLength='125.60' lengthAdjust='spacingAndGlyphs' stroke='#000' stroke-width='0.22'>thumbprint</text>
<text x='332.83' y='699.06' font-size='23.4' textLength='83.28' lengthAdjust='spacingAndGlyphs' stroke='#000' stroke-width='0.22'>cookies</text>
<text x='638.66' y='699.06' font-size='23.4' textLength='42.74' lengthAdjust='spacingAndGlyphs' stroke='#000' stroke-width='0.22'>720</text>
<text x='922.11' y='699.06' font-size='23.4' textLength='28.49' lengthAdjust='spacingAndGlyphs' stroke='#000' stroke-width='0.22'>22</text>
<text x='1042.21' y='699.06' font-size='23.4' textLength='50.89' lengthAdjust='spacingAndGlyphs' stroke='#000' stroke-width='0.22'>0.19</text>
<text x='1203.01' y='699.06' font-size='23.4' textLength='50.89' lengthAdjust='spacingAndGlyphs' stroke='#000' stroke-width='0.22'>0.08</text>
<text x='1295.38' y='699.06' font-size='23.4' textLength='99.72' lengthAdjust='spacingAndGlyphs' stroke='#000' stroke-width='0.22'>1300000</text>
<text x='1414.73' y='699.06' font-size='23.4' textLength='142.82' lengthAdjust='spacingAndGlyphs' stroke='#000' stroke-width='0.22'>nformational</text>
<text x='68.80' y='732.69' font-size='23.4' textLength='70.63' lengthAdjust='spacingAndGlyphs' stroke='#000' stroke-width='0.22'>gluten</text>
<text x='147.31' y='732.69' font-size='23.4' textLength='44.15' lengthAdjust='spacingAndGlyphs' stroke='#000' stroke-width='0.22'>free</text>
<text x='199.35' y='732.69' font-size='23.4' textLength='103.35' lengthAdjust='spacingAndGlyphs' stroke='#000' stroke-width='0.22'>molasses</text>
<text x='310.59' y='732.69' font-size='23.4' textLength='83.28' lengthAdjust='spacingAndGlyphs' stroke='#000' stroke-width='0.22'>cookies</text>
<text x='638.66' y='732.69' font-size='23.4' textLength='42.74' lengthAdjust='spacingAndGlyphs' stroke='#000' stroke-width='0.22'>590</text>
<text x='922.11' y='732.69' font-size='23.4' textLength='28.49' lengthAdjust='spacingAndGlyphs' stroke='#000' stroke-width='0.22'>21</text>
<text x='1042.21' y='732.69' font-size='23.4' textLength='50.89' lengthAdjust='spacingAndGlyphs' stroke='#000' stroke-width='0.22'>0.43</text>
<text x='1203.01' y='732.69' font-size='23.4' textLength='50.89' lengthAdjust='spacingAndGlyphs' stroke='#000' stroke-width='0.22'>0.41</text>
<text x='1295.38' y='732.69' font-size='23.4' textLength='99.72' lengthAdjust='spacingAndGlyphs' stroke='#000' stroke-width='0.22'>5340000</text>
<text x='1414.73' y='732.69' font-size='23.4' textLength='142.82' lengthAdjust='spacingAndGlyphs' stroke='#000' stroke-width='0.22'>nformational</text>
<text x='68.80' y='766.32' font-size='23.4' textLength='70.63' lengthAdjust='spacingAndGlyphs' stroke='#000' stroke-width='0.22'>gluten</text>
<text x='147.31' y='766.32' font-size='23.4' textLength='44.15' lengthAdjust='spacingAndGlyphs' stroke='#000' stroke-width='0.22'>free</text>
<text x='199.35' y='766.32' font-size='23.4' textLength='154.43' lengthAdjust='spacingAndGlyphs' stroke='#000' stroke-width='0.22'>snickerdoodle</text>
<text x='361.66' y='766.32' font-size='23.4' textLength='83.28' lengthAdjust='spacingAndGlyphs' stroke='#000' stroke-width='0.22'>cookies</text>
<text x='638.66' y='766.32' font-size='23.4' textLength='42.74' lengthAdjust='spacingAndGlyphs' stroke='#000' stroke-width='0.22'>590</text>
<text x='922.11' y='766.32' font-size='23.4' textLength='28.49' lengthAdjust='spacingAndGlyphs' stroke='#000' stroke-width='0.22'>21</text>
<text x='1042.21' y='766.32' font-size='23.4' textLength='50.89' lengthAdjust='spacingAndGlyphs' stroke='#000' stroke-width='0.22'>0.29</text>
<text x='1203.01' y='766.32' font-size='23.4' textLength='50.89' lengthAdjust='spacingAndGlyphs' stroke='#000' stroke-width='0.22'>0.89</text>
<text x='1295.38' y='766.32' font-size='23.4' textLength='99.72' lengthAdjust='spacingAndGlyphs' stroke='#000' stroke-width='0.22'>2220000</text>
<text x='1414.73' y='766.32' font-size='23.4' textLength='142.82' lengthAdjust='spacingAndGlyphs' stroke='#000' stroke-width='0.22'>nformational</text>
<text x='68.80' y='799.95' font-size='23.4' textLength='133.35' lengthAdjust='spacingAndGlyphs' stroke='#000' stroke-width='0.22'>Gluten-Free</text>
<text x='210.03' y='799.95' font-size='23.4' textLength='54.05' lengthAdjust='spacingAndGlyphs' stroke='#000' stroke-width='0.22'>M&amp;M</text>
<text x='271.97' y='799.95' font-size='23.4' textLength='87.25' lengthAdjust='spacingAndGlyphs' stroke='#000' stroke-width='0.22'>Cookies</text>
<text x='638.66' y='799.95' font-size='23.4' textLength='42.74' lengthAdjust='spacingAndGlyphs' stroke='#000' stroke-width='0.22'>170</text>
<text x='922.11' y='799.95' font-size='23.4' textLength='28.49' lengthAdjust='spacingAndGlyphs' stroke='#000' stroke-width='0.22'>20</text>
<text x='1078.85' y='799.95' font-size='23.4' textLength='14.25' lengthAdjust='spacingAndGlyphs' stroke='#000' stroke-width='0.22'>0</text>
<text x='1203.01' y='799.95' font-size='23.4' textLength='50.89' lengthAdjust='spacingAndGlyphs' stroke='#000' stroke-width='0.22'>0.34</text>
<text x='1295.38' y='799.95' font-size='23.4' textLength='99.72' lengthAdjust='spacingAndGlyphs' stroke='#000' stroke-width='0.22'>5860000</text>
<text x='1414.73' y='799.95' font-size='23.4' textLength='142.82' lengthAdjust='spacingAndGlyphs' stroke='#000' stroke-width='0.22'>nformational</text>
<text x='68.80' y='833.58' font-size='23.4' textLength='133.35' lengthAdjust='spacingAndGlyphs' stroke='#000' stroke-width='0.22'>Gluten-Free</text>
<text x='210.03' y='833.58' font-size='23.4' textLength='99.19' lengthAdjust='spacingAndGlyphs' stroke='#000' stroke-width='0.22'>Pistachio</text>
<text x='317.10' y='833.58' font-size='23.4' textLength='87.25' lengthAdjust='spacingAndGlyphs' stroke='#000' stroke-width='0.22'>Cookies</text>
<text x='652.91' y='833.58' font-size='23.4' textLength='28.49' lengthAdjust='spacingAndGlyphs' stroke='#000' stroke-width='0.22'>70</text>
<text x='922.11' y='833.58' font-size='23.4' textLength='28.49' lengthAdjust='spacingAndGlyphs' stroke='#000' stroke-width='0.22'>20</text>
<text x='1078.85' y='833.58' font-size='23.4' textLength='14.25' lengthAdjust='spacingAndGlyphs' stroke='#000' stroke-width='0.22'>0</text>
<text x='1203.01' y='833.58' font-size='23.4' textLength='50.89' lengthAdjust='spacingAndGlyphs' stroke='#000' stroke-width='0.22'>0.27</text>
<text x='1281.13' y='833.58' font-size='23.4' textLength='113.97' lengthAdjust='spacingAndGlyphs' stroke='#000' stroke-width='0.22'>12700000</text>
<text x='1414.73' y='833.58' font-size='23.4' textLength='142.82' lengthAdjust='spacingAndGlyphs' stroke='#000' stroke-width='0.22'>nformational</text>
<text x='68.80' y='256.60' font-size='24.0' font-weight='700' textLength='110.84' lengthAdjust='spacingAndGlyphs' stroke='#000' stroke-width='0.55'>Keyword</text>
<text x='549.80' y='256.60' font-size='24.0' font-weight='700' textLength='94.68' lengthAdjust='spacingAndGlyphs' stroke='#000' stroke-width='0.55'>Volume</text>
<text x='691.00' y='256.60' font-size='24.0' font-weight='700' textLength='110.84' lengthAdjust='spacingAndGlyphs' stroke='#000' stroke-width='0.55'>Keyword</text>
<text x='809.50' y='256.60' font-size='24.0' font-weight='700' textLength='114.40' lengthAdjust='spacingAndGlyphs' stroke='#000' stroke-width='0.55'>Difficulty</text>
<text x='1263.70' y='256.60' font-size='24.0' font-weight='700' textLength='100.28' lengthAdjust='spacingAndGlyphs' stroke='#000' stroke-width='0.55'>Number</text>
<text x='1417.53' y='256.60' font-size='24.0' font-weight='700' textLength='67.20' lengthAdjust='spacingAndGlyphs' stroke='#000' stroke-width='0.55'>ntent</text>
<svg x='957' y='233' width='111.9' height='32' viewBox='957 233 111.9 32' overflow='hidden'><text x='960.80' y='256.60' font-size='24.0' font-weight='700' textLength='48.85' lengthAdjust='spacingAndGlyphs' stroke='#000' stroke-width='0.55'>CPC</text></svg>
<svg x='957' y='233' width='111.9' height='32' viewBox='957 233 111.9 32' overflow='hidden'><text x='1017.32' y='256.60' font-size='24.0' font-weight='700' textLength='77.01' lengthAdjust='spacingAndGlyphs' stroke='#000' stroke-width='0.55'>(USD)</text></svg>
<svg x='1098.5' y='233' width='131.5' height='32' viewBox='1098.5 233 131.5 32' overflow='hidden'><text x='1102.80' y='256.60' font-size='24.0' font-weight='700' textLength='151.02' lengthAdjust='spacingAndGlyphs' stroke='#000' stroke-width='0.55'>Competitive</text></svg>
<text x='85.60' y='37.10' font-size='26.4' fill='#1f1f1f' textLength='199.50' lengthAdjust='spacingAndGlyphs' stroke='#1f1f1f' stroke-width='0.35'>Cookie Keywords</text>
<text x='86.50' y='70.70' font-size='20.2' fill='#1f1f1f' textLength='31.10' lengthAdjust='spacingAndGlyphs' stroke='#1f1f1f' stroke-width='0.28'>File</text>
<text x='140.50' y='70.70' font-size='20.2' fill='#1f1f1f' textLength='35.10' lengthAdjust='spacingAndGlyphs' stroke='#1f1f1f' stroke-width='0.28'>Edit</text>
<text x='198.00' y='70.70' font-size='20.2' fill='#1f1f1f' textLength='42.60' lengthAdjust='spacingAndGlyphs' stroke='#1f1f1f' stroke-width='0.28'>View</text>
<text x='263.50' y='70.70' font-size='20.2' fill='#1f1f1f' textLength='52.60' lengthAdjust='spacingAndGlyphs' stroke='#1f1f1f' stroke-width='0.28'>Insert</text>
<text x='339.00' y='70.70' font-size='20.2' fill='#1f1f1f' textLength='64.60' lengthAdjust='spacingAndGlyphs' stroke='#1f1f1f' stroke-width='0.28'>Format</text>
<text x='426.00' y='70.70' font-size='20.2' fill='#1f1f1f' textLength='43.10' lengthAdjust='spacingAndGlyphs' stroke='#1f1f1f' stroke-width='0.28'>Data</text>
<text x='491.50' y='70.70' font-size='20.2' fill='#1f1f1f' textLength='48.60' lengthAdjust='spacingAndGlyphs' stroke='#1f1f1f' stroke-width='0.28'>Tools</text>
<text x='562.50' y='70.70' font-size='20.2' fill='#1f1f1f' textLength='98.10' lengthAdjust='spacingAndGlyphs' stroke='#1f1f1f' stroke-width='0.28'>Extensions</text>
<text x='683.50' y='70.70' font-size='20.2' fill='#1f1f1f' textLength='41.60' lengthAdjust='spacingAndGlyphs' stroke='#1f1f1f' stroke-width='0.28'>Help</text>
<text x='85.80' y='125.40' font-size='19.4' fill='#3f4347' textLength='59.80' lengthAdjust='spacingAndGlyphs' stroke='#3f4347' stroke-width='0.12'>Menus</text>
<text x='368.60' y='127.20' font-size='19.8' fill='#3f4347' textLength='51.60' lengthAdjust='spacingAndGlyphs' stroke='#3f4347' stroke-width='0.25'>100%</text>
<text x='491.20' y='125.40' font-size='19.4' fill='#3f4347' textLength='10.40' lengthAdjust='spacingAndGlyphs' stroke='#3f4347' stroke-width='0.25'>$</text>
<text x='533.80' y='126.00' font-size='17.6' fill='#3f4347' textLength='14.80' lengthAdjust='spacingAndGlyphs' stroke='#3f4347' stroke-width='0.25'>%</text>
<text x='574.80' y='122.00' font-size='16.6' font-weight='700' fill='#3f4347' textLength='13.00' lengthAdjust='spacingAndGlyphs'>.0</text>
<text x='619.40' y='122.00' font-size='16.6' font-weight='700' fill='#3f4347' textLength='23.20' lengthAdjust='spacingAndGlyphs'>.00</text>
<text x='665.00' y='124.60' font-size='16.3' fill='#3f4347' textLength='25.20' lengthAdjust='spacingAndGlyphs' stroke='#3f4347' stroke-width='0.25'>123</text>
<text x='728.80' y='125.00' font-size='19.9' fill='#3f4347' textLength='74.40' lengthAdjust='spacingAndGlyphs' stroke='#3f4347' stroke-width='0.25'>Defaul...</text>
<text x='912.60' y='125.50' font-size='18.4' fill='#1f1f1f' textLength='21.20' lengthAdjust='spacingAndGlyphs' stroke='#1f1f1f' stroke-width='0.25'>10</text>
<text x='1011.20' y='126.75' font-size='20.6' font-weight='700' fill='#3f4347' textLength='14.60' lengthAdjust='spacingAndGlyphs'>B</text>
<text x='19.60' y='183.60' font-size='18.6' fill='#1f1f1f' textLength='31.40' lengthAdjust='spacingAndGlyphs' stroke='#1f1f1f' stroke-width='0.25'>X48</text>
<text x='165.00' y='184.60' font-size='23' font-weight='700' fill='#a3a7ab' textLength='19.50' lengthAdjust='spacingAndGlyphs' font-family='Liberation Serif, serif' font-style='italic'>fx</text>
</svg>
<svg style='left:0;top:0' width='1600' height='839' viewBox='0 0 1600 839'><rect x='684.73' y='228.83' width='276.2' height='700' fill='none' stroke='#ab81f1' stroke-width='8.15'/></svg>
</div>
</body></html>
